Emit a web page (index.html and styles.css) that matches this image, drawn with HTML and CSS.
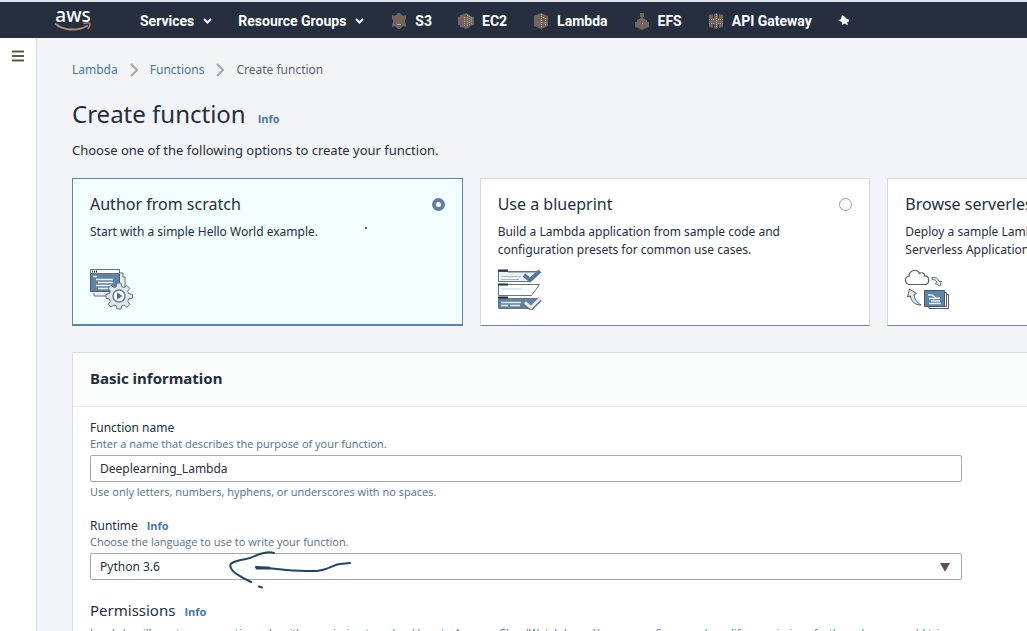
FILE: index.html
```html
<!DOCTYPE html>
<html lang="en">
<head>
<meta charset="utf-8">
<title>Create function</title>
<link rel="stylesheet" href="styles.css">
</head>
<body>
<header class="topnav">
  <a class="logo" href="#" aria-label="AWS home"><span class="logo-text">aws</span>
    <svg class="logo-smile" viewBox="0 0 38 10" aria-hidden="true"><path d="M1 1.5C9 8.5 23 9.8 34 3.500" stroke-width="2"/><path d="M29.500 1.500C33 .8 36 .6 36 1.600C36.300 3 35.500 5 33.800 7" stroke-width="1.400"/></svg></a>
  <nav class="links">
    <button class="menu services">Services <svg class="chev" viewBox="0 0 9 6"><path d="M1 1l3.500 3.500L8 1"/></svg></button>
    <button class="menu groups">Resource Groups <svg class="chev" viewBox="0 0 9 6"><path d="M1 1l3.500 3.500L8 1"/></svg></button>
    <a class="svc" href="#"><svg class="svc-icon" viewBox="0 0 16 18"><path d="M1 3l3 1 3-3h2l3 3 3-1v4l-1 1v3l1 1v3l-3-1-3 3H7l-3-3-3 1v-3l1-1V8L1 7z"/><path class="lite" d="M6 12.500h4"/></svg>S3</a>
    <a class="svc" href="#"><svg class="svc-icon" viewBox="0 0 16 18"><path d="M0 5l2-.5V3l3-.5L8 1l4 2v1l4 1v8l-4 1v1l-4 2-3-1.500-3-.5v-1.500L0 13z"/><path class="lite dash" d="M6.500 5v9M9.500 3v12M11.500 4v10M13.500 5v8"/></svg>EC2</a>
    <a class="svc" href="#"><svg class="svc-icon" viewBox="0 0 16 18"><path d="M1 4l7-3 7 3v10l-7 3-7-3z"/><path class="lite dash" d="M8.500 2v14M10.500 5v2M12.500 6v7"/></svg>Lambda</a>
    <a class="svc" href="#"><svg class="svc-icon" viewBox="0 0 16 18"><path d="M6 1h4v4H9v1l4 2v2h2v5l-3 1-4 2-4-2-3-1v-5h2V8l4-2V5H6z"/><path class="lite" d="M8 11.500h1"/></svg>EFS</a>
    <a class="svc" href="#"><svg class="svc-icon" viewBox="0 0 16 18"><path d="M1 3l4-1v4h1V2l2-1 2 1v4h1V2l4 1v4h-3v1h3v3h-3v1h3v3l-4 1v-4h-1v4l-2 1-2-1v-4H5v4l-4-1v-3h3v-1H1V8h3V7H1z"/><path class="lite dash" d="M8.500 2v14M1 7.500h5M10 7.500h5M1 11.500h5M10 11.500h5"/></svg>API Gateway</a>
    <button class="pin" aria-label="Pin shortcuts"><svg viewBox="0 0 12 12"><path d="M4 0l2.500 1.500L8 3.500l3 1v2l-2 .5 1 3.500-3-2-3 1.500V7L0 5.500 3 4z"/></svg></button>
  </nav>
</header>
<div class="shell">
  <aside class="rail"><button class="burger" aria-label="Open navigation"><svg viewBox="0 0 12 12"><path d="M0 1.500h12M0 6h12M0 10.500h12"/></svg></button></aside>
  <main class="content">
    <nav class="crumbs" aria-label="Breadcrumb">
      <a href="#">Lambda</a><svg viewBox="0 0 8 14"><path d="M1 1l6 6-6 6"/></svg>
      <a href="#">Functions</a><svg viewBox="0 0 8 14"><path d="M1 1l6 6-6 6"/></svg>
      <span>Create function</span>
    </nav>
    <div class="title"><h1>Create function</h1><a class="info" href="#">Info</a></div>
    <p class="lead">Choose one of the following options to create your function.</p>

    <div class="cards">
      <label class="card selected">
        <span class="card-head">Author from scratch<input type="radio" name="source" checked></span>
        <span class="card-desc">Start with a simple Hello World example.</span>
        <svg class="art" viewBox="0 0 44 41" aria-hidden="true">
          <path d="M4 24v3h14v-3M29 4h4v4h2v12" fill="#e6edf2" stroke="#687078"/>
          <path fill="#5f83a5" stroke="#545b64" d="M.5.5h29v22h-29z"/>
          <path fill="#fff" stroke="#687078" d="M.5.5h29v4h-29z"/>
          <path stroke="#232f3e" stroke-width="2" stroke-dasharray="1 1" d="M2 2.500h6"/>
          <path stroke="#eef4f8" stroke-width="1.500" d="M3 7.500h4M6 10.500h17M8 13.500h15M6 16.500h15M8 19.500h10"/>
          <path fill="#dfe6ed" stroke="#687078" d="M27 14l4 0 .6 3.600 2.400 1 3-2.100 2.800 2.800-2.100 3 1 2.400 3.800.6v4l-3.800.6-1 2.400 2.100 3-2.800 2.800-3-2.100-2.400 1L31 40h-4l-.6-3-2.400-1-3 2.100-2.800-2.800 2.100-3-1-2.400-3.300-.6v-4l3.300-.6 1-2.400-2.100-3 2.800-2.800 3 2.100 2.400-1z"/>
          <circle cx="29" cy="27" r="6" fill="#fff" stroke="#5f7f9c" stroke-width="1.500"/><path fill="#466b8e" d="M27 23.500l5.500 3.500-5.500 3.500z"/>
        </svg>
        <svg class="speck" viewBox="0 0 2 2" aria-hidden="true"><circle cx="1" cy="1" r="1"/></svg>
      </label>
      <label class="card">
        <span class="card-head">Use a blueprint<input type="radio" name="source"></span>
        <span class="card-desc">Build a Lambda application from sample code and configuration presets for common use cases.</span>
        <svg class="art" viewBox="0 0 44 41" aria-hidden="true">
          <path fill="#edf0f3" stroke="#687078" d="M.5 2.500h40l-8 10H.5z"/><path fill="#fff" stroke="#687078" d="M.5 15.500h41l-8 11H.5z"/><path fill="#5f83a5" stroke="#687078" d="M.5 29.500h41l-8 10H.5z"/>
          <path stroke="#232f3e" stroke-width="2" d="M0 1.500h10M0 15.500h10M0 28.500h10"/>
          <path stroke="#a9b7c4" d="M10 3.500h28M3 7.500h20M3 10.500h18"/><path stroke="#dce9f1" stroke-width="2" d="M3 20h20"/><path stroke="#e5edf3" stroke-width="1.500" d="M3 33.500h20M3 36.500h7M12 36.500h10"/>
          <path stroke="#52789b" stroke-width="4" d="M26 6l6 5L42 2"/><path stroke="#687078" stroke-width="5" d="M27 34l6 5 9-9"/><path stroke="#e5edf3" stroke-width="3" d="M27 33.500l6 5 9-9"/>
        </svg>
      </label>
      <label class="card">
        <span class="card-head">Browse serverless app repository<input type="radio" name="source"></span>
        <span class="card-desc">Deploy a sample Lambda application from the AWS Serverless Application Repository.</span>
        <svg class="art" viewBox="0 0 44 41" aria-hidden="true">
          <path fill="#fff" stroke="#545b64" stroke-width="1.200" d="M4 15.500C-1 14-.5 7.500 4 7.500 4 1 12-1 14.500 4.500 18 2.500 20 5 19.500 7c5-.5 5.500 7 1.500 8.500z"/>
          <path fill="#e2edf4" stroke="#687078" d="M27 8.500c4-.5 6 1 7 4l2.500-.5-1.500 5-5-2.500 2-1c-1-2.500-2.500-3-5-3z"/>
          <path fill="#dce8f0" stroke="#545b64" d="M4.500 20l7 4.500-2.500 1c.5 5 3 8 7 10.500C9.500 36 6 32 5.500 27L2.500 28z"/>
          <path fill="#fff" stroke="#545b64" d="M24 25.500h19.500v14H24z"/><path fill="#fff" stroke="#545b64" d="M22 23.500h19.500v14H22z"/><path fill="#5f83a5" stroke="#3f5872" d="M19.500 21.500h20v16h-20z"/>
          <path stroke="#e5edf3" stroke-width="1.500" d="M23 26h4l4 3h4M24 29.500h10M26 32h9M24 34.500h12"/>
        </svg>
      </label>
    </div>

    <section class="panel">
      <h2 class="panel-head">Basic information</h2>
      <div class="panel-body">
        <div class="field">
          <label for="fn">Function name</label>
          <p class="hint">Enter a name that describes the purpose of your function.</p>
          <input class="control" id="fn" type="text" value="Deeplearning_Lambda">
          <p class="hint">Use only letters, numbers, hyphens, or underscores with no spaces.</p>
        </div>
        <div class="field">
          <div class="label-row"><label for="rt">Runtime</label><a class="info" href="#">Info</a></div>
          <p class="hint">Choose the language to use to write your function.</p>
          <div class="select-wrap">
            <select class="control" id="rt"><option>Python 3.6</option></select>
            <svg class="caret" viewBox="0 0 10 8" aria-hidden="true"><path d="M0 0h10L5.500 8h-1z"/></svg>
            <svg class="sketch" viewBox="0 0 124 40" aria-hidden="true"><path d="M46 3C40 1 34 3 27 6C20 10 15 9 9 11C3 13 1 14 3 18C5 24 12 25 15 28L23 32"/><path d="M31 36.500l3 1"/><path d="M28 17c16 1 32 4 50 4 22 1 25-6 34-7l10-1"/><path class="tail" d="M29 18h12"/></svg>
          </div>
        </div>
        <div class="label-row"><h3>Permissions</h3><a class="info" href="#">Info</a></div>
        <p class="hint perms-text">Lambda will create an execution role with permission to upload logs to Amazon CloudWatch Logs. You can configure and modify permissions further when you add triggers.</p>
      </div>
    </section>
  </main>
</div>
</body>
</html>
```
FILE: styles.css
```css
* { box-sizing: border-box; }
body {
  margin: 0;
  height: 100vh;
  overflow: hidden;
  display: flex;
  flex-direction: column;
  font: 12px/18px "Noto Sans", sans-serif;
  color: #232f3e;
  background: #f3f4f7;
}
h1, h2, h3, p { margin: 0; font-weight: 400; }
a { color: #45799b; text-decoration: none; }
button { border: 0; padding: 0; background: none; color: inherit; font: inherit; }
svg { display: block; fill: none; flex: none; }

.topnav {
  flex: none;
  display: flex;
  align-items: center;
  height: 38px;
  padding: 2px 0 0 54px;
  border-top: 2px solid #dde1ea;
  background: #252f3f;
  color: #fff;
  font: 700 14px/20px Roboto, sans-serif;
}
.logo { width: 38px; margin: 0 48px 2px 0; color: #fff; }
.logo-text { display: block; text-align: center; font: 500 19px/14px "Noto Sans", sans-serif; }
.logo-smile { width: 38px; height: 10px; stroke: #b08d78; }
.links { display: flex; align-items: center; white-space: nowrap; }
.menu { display: flex; align-items: center; gap: 9px; }
.services { margin-right: 26px; }
.groups { margin-right: 27px; }
.chev { width: 9px; height: 6px; stroke: #fff; stroke-width: 2; }
.svc { display: flex; align-items: center; gap: 8px; margin-right: 26px; color: #fff; }
.svc-icon { width: 16px; height: 18px; fill: #75645c; }
.lite { stroke: #b5aaa4; }
.dash { stroke-dasharray: 1 1; }
.pin svg { width: 12px; height: 12px; fill: #fff; }

.shell { flex: 1; display: flex; min-height: 0; }
.rail { flex: none; width: 37px; background: #fff; border-right: 1px solid #d3d8e0; }
.burger { display: block; margin: 12px 0 0 12px; }
.burger svg { width: 12px; height: 12px; stroke: #5f5652; stroke-width: 2; }

.content { flex: 1; min-width: 1276px; padding: 20px 35px 0; }
.crumbs { display: flex; align-items: center; gap: 12px; line-height: 24px; }
.crumbs svg { width: 8px; height: 14px; stroke: #a3a8ae; stroke-width: 2; }
.crumbs span { color: #596573; }
.title, .label-row { display: flex; align-items: baseline; }
.title { gap: 12px; margin-top: 15px; }
h1 { font-size: 24px; line-height: 34px; }
.info { font-family: "Open Sans", sans-serif; font-size: 11px; font-weight: 700; }
.lead { margin-top: 8px; font-size: 13px; line-height: 22px; }

.cards { display: grid; grid-template-columns: repeat(3, 1fr); gap: 17px; margin-top: 17px; }
.card {
  position: relative;
  display: flex;
  flex-direction: column;
  padding: 14px 17px 15px;
  background: #fff;
  border: 1px solid #d5dbdb;
  border-bottom-color: #6b8799;
}
.card.selected { background: #f1fdff; border-color: #5b84a5; box-shadow: inset 0 -1px 0 #5b84a5; }
.card-head { display: flex; align-items: center; justify-content: space-between; font-size: 16px; line-height: 22px; }
.card-desc { margin: 8px 50px 10px 0; }
.card input { appearance: none; width: 13px; height: 13px; margin: 0; border: 1px solid #949ca5; border-radius: 50%; background: #fff; }
.card input:checked { border: 4px solid #5b7f9f; }
.art { width: 44px; height: 41px; margin-top: auto; }
.speck { position: absolute; left: 292px; top: 48px; width: 2px; height: 2px; fill: #232f3e; }

.panel { margin-top: 26px; background: #fff; border: 1px solid #d9dde0; }
.panel-head { padding: 14px 17px 17px; border-bottom: 1px solid #eaeded; background: #fafbfb; font-size: 15px; line-height: 22px; font-weight: 700; }
.panel-body { padding: 12px 17px; }
.field { max-width: 872px; margin-bottom: 18px; }
.field label { display: block; }
.label-row { gap: 9px; }
.hint { color: #557087; font-family: "Open Sans", sans-serif; font-size: 11px; line-height: 14px; }
.control {
  display: block;
  width: 100%;
  height: 27px;
  margin: 4px 0 3px;
  padding: 0 9px;
  border: 1px solid #a6aaab;
  border-radius: 2px;
  background: #fff;
  color: inherit;
  font: inherit;
}
select.control { appearance: none; }
.select-wrap { position: relative; }
.caret { position: absolute; right: 12px; top: 10px; width: 10px; height: 8px; fill: #5d514e; pointer-events: none; }
.sketch { position: absolute; left: 138px; top: -3px; width: 124px; height: 40px; stroke: #1f456b; stroke-width: 2; stroke-linecap: round; pointer-events: none; }
.tail { stroke-width: 3; }
h3 { font-size: 15px; line-height: 24px; }
.perms-text { margin-top: 2px; line-height: 18px; }
```
